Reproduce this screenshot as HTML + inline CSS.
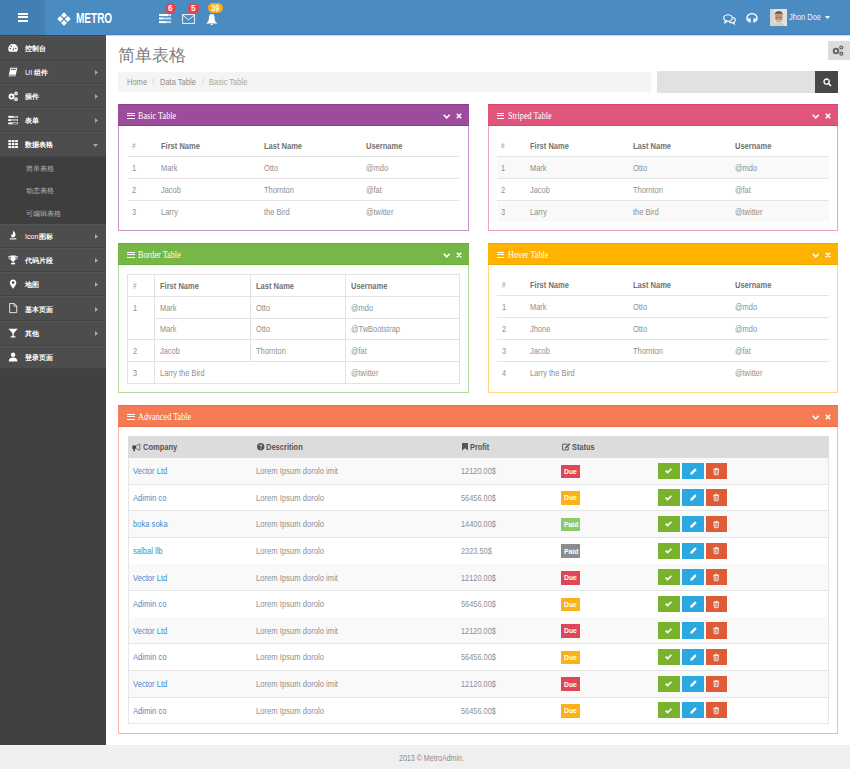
<!DOCTYPE html>
<html><head><meta charset="utf-8"><title>Metro Admin</title>
<style>
*{box-sizing:border-box;margin:0;padding:0}
html,body{width:850px;height:769px;overflow:hidden;background:#fff}
body{position:relative;font-family:"Liberation Sans",sans-serif}
.t{position:absolute;white-space:nowrap}
.b{position:absolute}
svg{position:absolute;overflow:visible}
</style></head><body>
<div class="b" style="left:0.00px;top:0.00px;width:850.00px;height:35.00px;background:#4a8bc2"></div>
<div class="b" style="left:106.00px;top:34.00px;width:744.00px;height:1.00px;background:#3f80bf"></div>
<div class="b" style="left:106.00px;top:35.00px;width:744.00px;height:1.00px;background:#c4d9ee"></div>
<div class="b" style="left:0.00px;top:34.00px;width:106.00px;height:1.00px;background:#4a90d0"></div>
<div class="b" style="left:0.00px;top:0.00px;width:45.00px;height:35.00px;background:#437fb3"></div>
<div class="b" style="left:17.60px;top:13.20px;width:10.80px;height:2.00px;background:#fff"></div>
<div class="b" style="left:17.60px;top:16.40px;width:10.80px;height:2.00px;background:#fff"></div>
<div class="b" style="left:17.60px;top:19.60px;width:10.80px;height:2.00px;background:#fff"></div>
<svg style="left:57px;top:12px" width="14" height="14" viewBox="0 0 14 14"><g fill="#fff"><path d="M7 0.3L9.9 3.2L7 6.1L4.1 3.2Z"/><path d="M3.2 4.1L6.1 7L3.2 9.9L0.3 7Z"/><path d="M10.8 4.1L13.7 7L10.8 9.9L7.9 7Z"/><path d="M7 7.9L9.9 10.8L7 13.7L4.1 10.8Z"/></g></svg>
<div class="t" style="left:76.30px;top:11.35px;font-size:14px;line-height:14px;color:#fff;font-weight:bold;font-family:'Liberation Sans',sans-serif;transform:scaleX(0.715);transform-origin:0 0;">METRO</div>
<svg style="left:158.7px;top:13.8px" width="12.5" height="9.5" viewBox="0 0 12.5 9.5"><g fill="#fff"><rect x="0" y="0" width="9.3" height="2.1"/><rect x="9.3" y="0" width="2.9" height="2.1" opacity=".7"/><rect x="0" y="3.5" width="4.2" height="2"/><rect x="4.2" y="3.5" width="8" height="2" opacity=".7"/><rect x="0" y="7.1" width="7.3" height="2"/><rect x="7.3" y="7.1" width="4.9" height="2" opacity=".7"/></g></svg>
<svg style="left:182px;top:14px" width="13" height="10" viewBox="0 0 13 10"><g fill="none" stroke="#f4f8fc" stroke-width=".95"><rect x="0.6" y="0.6" width="11.8" height="8.8"/><path d="M0.8 1.2L6.5 5.8L12.2 1.2"/></g></svg>
<svg style="left:206.3px;top:13.5px" width="11.5" height="11.6" viewBox="0 0 11.5 11.6"><path fill="#fff" d="M5.75 0C3.4 0 2.9 2 2.9 4.2C2.9 6.6 1.8 8 0 9.6L11.5 9.6C9.7 8 8.6 6.6 8.6 4.2C8.6 2 8.1 0 5.75 0Z M4.3 10.1L7.2 10.1L5.75 11.6Z"/></svg>
<div class="b" style="left:164.80px;top:3.00px;width:11.10px;height:10.60px;background:#e7434f;border-radius:50%"></div>
<div class="t" style="left:167.85px;top:4.45px;font-size:8.6px;line-height:8.6px;color:#fff;font-weight:bold;font-family:'Liberation Sans',sans-serif;transform:scaleX(0.95);transform-origin:0 0;">6</div>
<div class="b" style="left:188.30px;top:3.00px;width:11.00px;height:10.60px;background:#e7434f;border-radius:50%"></div>
<div class="t" style="left:191.30px;top:4.45px;font-size:8.6px;line-height:8.6px;color:#fff;font-weight:bold;font-family:'Liberation Sans',sans-serif;transform:scaleX(0.95);transform-origin:0 0;">5</div>
<div class="b" style="left:207.50px;top:2.90px;width:15.60px;height:10.60px;background:#fcae18;border-radius:5.3px"></div>
<div class="t" style="left:210.60px;top:4.35px;font-size:8.4px;line-height:8.4px;color:#fff;font-weight:bold;font-family:'Liberation Sans',sans-serif;transform:scaleX(0.9);transform-origin:0 0;">39</div>
<svg style="left:722.5px;top:13.5px" width="13" height="11" viewBox="0 0 13 11"><g fill="none" stroke="#fff" stroke-width="1.1"><ellipse cx="5" cy="4" rx="4.3" ry="3.2"/><path d="M2.5 6.8L1.8 8.8L4.5 7.3"/><path d="M9.6 3.2C11.6 3.9 12.5 5.1 12.3 6.4C12.1 7.4 11.4 8 10.8 8.3L11.3 10L9 8.6C7.8 8.7 6.8 8.4 6 7.8"/></g></svg>
<svg style="left:746.3px;top:13.2px" width="12" height="10" viewBox="0 0 12 10"><g fill="#fff"><path d="M6 0C2.7 0 0.3 2.3 0.3 5.3C0.3 6.7 0.8 7.7 1.6 8.5L2.6 7.8C2 7.1 1.6 6.3 1.6 5.3C1.6 3 3.5 1.3 6 1.3C8.5 1.3 10.4 3 10.4 5.3C10.4 6.3 10 7.1 9.4 7.8L10.4 8.5C11.2 7.7 11.7 6.7 11.7 5.3C11.7 2.3 9.3 0 6 0Z"/><path d="M2.2 5.2L4.6 5.6L4.6 9.8L2.2 8.8Z"/><path d="M9.8 5.2L7.4 5.6L7.4 9.8L9.8 8.8Z"/></g></svg>
<svg style="left:770px;top:9px" width="17" height="17" viewBox="0 0 17 17"><rect width="17" height="17" fill="#e4e2df"/><rect x="0" y="0" width="4" height="17" fill="#d8d5d1"/><path d="M3 17C3.5 14.2 5.5 13.2 8.8 13.2C12 13.2 14 14.2 14.5 17Z" fill="#d9cfc6"/><ellipse cx="8.8" cy="8.4" rx="3.9" ry="4.9" fill="#c39377"/><path d="M4.8 6.6C4.6 3.4 6.4 2.3 8.8 2.3C11.3 2.3 13 3.4 12.8 6.6L12.2 5.2C11 4.4 6.6 4.4 5.4 5.2Z" fill="#5e4a3e"/><path d="M6.6 8.6H7.8M9.8 8.6H11" stroke="#4a3a30" stroke-width=".7"/><path d="M7.3 11.2C8.2 11.8 9.4 11.8 10.3 11.2" stroke="#f4eee8" stroke-width=".8" fill="none"/></svg>
<div class="t" style="left:789.00px;top:12.50px;font-size:8.5px;line-height:8.5px;color:#eef3f8;font-weight:normal;font-family:'Liberation Sans',sans-serif;transform:scaleX(0.8800);transform-origin:0 0;">Jhon Doe</div>
<svg style="left:825px;top:15.8px" width="5" height="3" viewBox="0 0 5 3"><path d="M0 0H5L2.5 3Z" fill="#fff"/></svg>
<div class="b" style="left:0.00px;top:35.00px;width:106.00px;height:710.00px;background:#414141"></div>
<div class="b" style="left:0.00px;top:35.50px;width:106.00px;height:25.00px;background:#4d4d4d"></div>
<div class="b" style="left:0.00px;top:59.50px;width:106.00px;height:1.00px;background:#444"></div>
<div class="b" style="left:0.00px;top:35.50px;width:106.00px;height:0.60px;background:#555"></div>
<div class="t" style="left:25.00px;top:45.03px;font-size:7.2px;line-height:7.2px;color:#fff;font-weight:bold;font-family:'Liberation Sans',sans-serif;">控制台</div>
<div class="b" style="left:0.00px;top:60.50px;width:106.00px;height:23.90px;background:#4d4d4d"></div>
<div class="b" style="left:0.00px;top:83.40px;width:106.00px;height:1.00px;background:#444"></div>
<div class="b" style="left:0.00px;top:60.50px;width:106.00px;height:0.60px;background:#555"></div>
<div class="t" style="left:25.00px;top:69.48px;font-size:7.2px;line-height:7.2px;color:#fff;font-weight:bold;font-family:'Liberation Sans',sans-serif;"><span style='font-weight:normal'>UI</span> 组件</div>
<svg style="left:94.5px;top:70.45px" width="3" height="5" viewBox="0 0 3 5"><path d="M0 0L3 2.5L0 5Z" fill="#aaa"/></svg>
<div class="b" style="left:0.00px;top:84.40px;width:106.00px;height:23.90px;background:#4d4d4d"></div>
<div class="b" style="left:0.00px;top:107.30px;width:106.00px;height:1.00px;background:#444"></div>
<div class="b" style="left:0.00px;top:84.40px;width:106.00px;height:0.60px;background:#555"></div>
<div class="t" style="left:25.00px;top:93.38px;font-size:7.2px;line-height:7.2px;color:#fff;font-weight:bold;font-family:'Liberation Sans',sans-serif;">插件</div>
<svg style="left:94.5px;top:94.35px" width="3" height="5" viewBox="0 0 3 5"><path d="M0 0L3 2.5L0 5Z" fill="#aaa"/></svg>
<div class="b" style="left:0.00px;top:108.30px;width:106.00px;height:24.00px;background:#4d4d4d"></div>
<div class="b" style="left:0.00px;top:131.30px;width:106.00px;height:1.00px;background:#444"></div>
<div class="b" style="left:0.00px;top:108.30px;width:106.00px;height:0.60px;background:#555"></div>
<div class="t" style="left:25.00px;top:117.33px;font-size:7.2px;line-height:7.2px;color:#fff;font-weight:bold;font-family:'Liberation Sans',sans-serif;">表单</div>
<svg style="left:94.5px;top:118.30px" width="3" height="5" viewBox="0 0 3 5"><path d="M0 0L3 2.5L0 5Z" fill="#aaa"/></svg>
<div class="b" style="left:0.00px;top:132.30px;width:106.00px;height:24.20px;background:#4d4d4d"></div>
<div class="b" style="left:0.00px;top:155.50px;width:106.00px;height:1.00px;background:#444"></div>
<div class="b" style="left:0.00px;top:132.30px;width:106.00px;height:0.60px;background:#555"></div>
<div class="t" style="left:25.00px;top:141.43px;font-size:7.2px;line-height:7.2px;color:#fff;font-weight:bold;font-family:'Liberation Sans',sans-serif;">数据表格</div>
<svg style="left:93.2px;top:144.00px" width="5" height="3" viewBox="0 0 5 3"><path d="M0 0H5L2.5 3Z" fill="#aaa"/></svg>
<div class="b" style="left:0.00px;top:156.50px;width:106.00px;height:67.20px;background:#3e3e3e"></div>
<div class="t" style="left:26.40px;top:165.03px;font-size:7.2px;line-height:7.2px;color:#b4b4b4;font-weight:normal;font-family:'Liberation Sans',sans-serif;">简单表格</div>
<div class="t" style="left:26.40px;top:187.43px;font-size:7.2px;line-height:7.2px;color:#b4b4b4;font-weight:normal;font-family:'Liberation Sans',sans-serif;">动态表格</div>
<div class="t" style="left:26.40px;top:209.83px;font-size:7.2px;line-height:7.2px;color:#b4b4b4;font-weight:normal;font-family:'Liberation Sans',sans-serif;">可编辑表格</div>
<div class="b" style="left:0.00px;top:223.70px;width:106.00px;height:24.30px;background:#4d4d4d"></div>
<div class="b" style="left:0.00px;top:247.00px;width:106.00px;height:1.00px;background:#444"></div>
<div class="b" style="left:0.00px;top:223.70px;width:106.00px;height:0.60px;background:#555"></div>
<div class="t" style="left:25.00px;top:232.88px;font-size:7.2px;line-height:7.2px;color:#fff;font-weight:bold;font-family:'Liberation Sans',sans-serif;"><span style='font-weight:normal'>Icon</span>图标</div>
<svg style="left:94.5px;top:233.85px" width="3" height="5" viewBox="0 0 3 5"><path d="M0 0L3 2.5L0 5Z" fill="#aaa"/></svg>
<div class="b" style="left:0.00px;top:248.00px;width:106.00px;height:24.20px;background:#4d4d4d"></div>
<div class="b" style="left:0.00px;top:271.20px;width:106.00px;height:1.00px;background:#444"></div>
<div class="b" style="left:0.00px;top:248.00px;width:106.00px;height:0.60px;background:#555"></div>
<div class="t" style="left:25.00px;top:257.13px;font-size:7.2px;line-height:7.2px;color:#fff;font-weight:bold;font-family:'Liberation Sans',sans-serif;">代码片段</div>
<svg style="left:94.5px;top:258.10px" width="3" height="5" viewBox="0 0 3 5"><path d="M0 0L3 2.5L0 5Z" fill="#aaa"/></svg>
<div class="b" style="left:0.00px;top:272.20px;width:106.00px;height:24.20px;background:#4d4d4d"></div>
<div class="b" style="left:0.00px;top:295.40px;width:106.00px;height:1.00px;background:#444"></div>
<div class="b" style="left:0.00px;top:272.20px;width:106.00px;height:0.60px;background:#555"></div>
<div class="t" style="left:25.00px;top:281.33px;font-size:7.2px;line-height:7.2px;color:#fff;font-weight:bold;font-family:'Liberation Sans',sans-serif;">地图</div>
<svg style="left:94.5px;top:282.30px" width="3" height="5" viewBox="0 0 3 5"><path d="M0 0L3 2.5L0 5Z" fill="#aaa"/></svg>
<div class="b" style="left:0.00px;top:296.40px;width:106.00px;height:24.80px;background:#4d4d4d"></div>
<div class="b" style="left:0.00px;top:320.20px;width:106.00px;height:1.00px;background:#444"></div>
<div class="b" style="left:0.00px;top:296.40px;width:106.00px;height:0.60px;background:#555"></div>
<div class="t" style="left:25.00px;top:305.83px;font-size:7.2px;line-height:7.2px;color:#fff;font-weight:bold;font-family:'Liberation Sans',sans-serif;">基本页面</div>
<svg style="left:94.5px;top:306.80px" width="3" height="5" viewBox="0 0 3 5"><path d="M0 0L3 2.5L0 5Z" fill="#aaa"/></svg>
<div class="b" style="left:0.00px;top:321.20px;width:106.00px;height:24.40px;background:#4d4d4d"></div>
<div class="b" style="left:0.00px;top:344.60px;width:106.00px;height:1.00px;background:#444"></div>
<div class="b" style="left:0.00px;top:321.20px;width:106.00px;height:0.60px;background:#555"></div>
<div class="t" style="left:25.00px;top:330.43px;font-size:7.2px;line-height:7.2px;color:#fff;font-weight:bold;font-family:'Liberation Sans',sans-serif;">其他</div>
<svg style="left:94.5px;top:331.40px" width="3" height="5" viewBox="0 0 3 5"><path d="M0 0L3 2.5L0 5Z" fill="#aaa"/></svg>
<div class="b" style="left:0.00px;top:345.60px;width:106.00px;height:23.40px;background:#4d4d4d"></div>
<div class="b" style="left:0.00px;top:368.00px;width:106.00px;height:1.00px;background:#444"></div>
<div class="b" style="left:0.00px;top:345.60px;width:106.00px;height:0.60px;background:#555"></div>
<div class="t" style="left:25.00px;top:354.33px;font-size:7.2px;line-height:7.2px;color:#fff;font-weight:bold;font-family:'Liberation Sans',sans-serif;">登录页面</div>
<svg style="left:8.1px;top:42.70px" width="10.2" height="10.2" viewBox="0 0 11 11"><path fill="#fff" d="M5.5 1C2.5 1 0.3 3.3 0.3 6.2C0.3 7.5 0.7 8.6 1.4 9.5L9.6 9.5C10.3 8.6 10.7 7.5 10.7 6.2C10.7 3.3 8.5 1 5.5 1Z"/><g fill="#4d4d4d"><circle cx="2.6" cy="6" r=".8"/><circle cx="3.6" cy="3.5" r=".8"/><circle cx="8.4" cy="6" r=".8"/><path d="M5 8L6.6 3.4L6.3 8.2Z"/></g></svg>
<svg style="left:8.1px;top:67.20px" width="10.2" height="10.2" viewBox="0 0 11 11"><path fill="#fff" d="M2.5 0.8H10L8.5 8.5H1Z"/><path fill="#4d4d4d" d="M3.2 2H8.8L8.6 3H3Z"/><path fill="#fff" d="M0.7 9.2H8.4V10H0.5Z"/></svg>
<svg style="left:8.1px;top:91.00px" width="10.2" height="10.2" viewBox="0 0 11 11"><circle fill="#fff" cx="3.8" cy="6" r="3.2"/><circle fill="#4d4d4d" cx="3.8" cy="6" r="1.2"/><circle fill="#fff" cx="8.7" cy="2.6" r="2"/><circle fill="#4d4d4d" cx="8.7" cy="2.6" r=".7"/><circle fill="#fff" cx="8.7" cy="8.8" r="2"/><circle fill="#4d4d4d" cx="8.7" cy="8.8" r=".7"/></svg>
<svg style="left:8.1px;top:115.00px" width="10.2" height="10.2" viewBox="0 0 11 11"><g fill="#fff"><rect x="0.3" y="1" width="10.4" height="2"/><rect x="0.3" y="4.5" width="10.4" height="2"/><rect x="0.3" y="8" width="10.4" height="2"/></g><g fill="#4d4d4d"><rect x="6" y="1.5" width="4" height="1"/><rect x="3" y="5" width="7" height="1"/><rect x="5" y="8.5" width="5" height="1"/></g></svg>
<svg style="left:8.1px;top:138.70px" width="10.2" height="10.2" viewBox="0 0 11 11"><g fill="#fff"><rect x="0.3" y="1.2" width="3" height="2.2"/><rect x="4" y="1.2" width="3" height="2.2"/><rect x="7.7" y="1.2" width="3" height="2.2"/><rect x="0.3" y="4.4" width="3" height="2.2"/><rect x="4" y="4.4" width="3" height="2.2"/><rect x="7.7" y="4.4" width="3" height="2.2"/><rect x="0.3" y="7.6" width="3" height="2.2"/><rect x="4" y="7.6" width="3" height="2.2"/><rect x="7.7" y="7.6" width="3" height="2.2"/></g></svg>
<svg style="left:8.1px;top:230.20px" width="10.2" height="10.2" viewBox="0 0 11 11"><path fill="#fff" d="M6 0.5C7 2.5 8.5 3.5 8 6C7.6 7.6 6 8.2 4.8 8C3.4 7.6 3 6 4 4.5C4.8 5.4 5.5 5 5.3 4C5 2.5 6 1.5 6 0.5Z"/><rect fill="#fff" x="2" y="9" width="7" height="1.2"/></svg>
<svg style="left:8.1px;top:254.70px" width="10.2" height="10.2" viewBox="0 0 11 11"><path fill="#fff" d="M2.8 0.6H8.2V3.8C8.2 5.6 7 6.8 5.5 6.8C4 6.8 2.8 5.6 2.8 3.8Z"/><path fill="none" stroke="#fff" stroke-width=".9" d="M2.8 1.6H0.7C0.7 3.6 1.7 4.6 3 4.6M8.2 1.6H10.3C10.3 3.6 9.3 4.6 8 4.6"/><rect fill="#fff" x="4.9" y="6.5" width="1.2" height="2"/><rect fill="#fff" x="3.3" y="8.5" width="4.4" height="1.6"/></svg>
<svg style="left:8.1px;top:278.90px" width="10.2" height="10.2" viewBox="0 0 11 11"><path fill="#fff" d="M5.5 0.5C3.4 0.5 2 2 2 4C2 6.2 4 8.2 5.5 10.5C7 8.2 9 6.2 9 4C9 2 7.6 0.5 5.5 0.5Z"/><circle fill="#4d4d4d" cx="5.5" cy="3.9" r="1.4"/></svg>
<svg style="left:8.1px;top:303.20px" width="10.2" height="10.2" viewBox="0 0 11 11"><path fill="none" stroke="#fff" stroke-width=".9" d="M1.8 0.6H6.8L9.4 3.2V10.4H1.8Z M6.6 0.6V3.4H9.4"/></svg>
<svg style="left:8.1px;top:327.80px" width="10.2" height="10.2" viewBox="0 0 11 11"><path fill="#fff" d="M0.5 0.8H10.5L6.2 5.6V9H8V10.2H3V9H4.8V5.6Z"/></svg>
<svg style="left:8.1px;top:351.60px" width="10.2" height="10.2" viewBox="0 0 11 11"><circle fill="#fff" cx="5.5" cy="3" r="2.4"/><path fill="#fff" d="M0.8 10.3C0.8 7.3 2.5 6 5.5 6C8.5 6 10.2 7.3 10.2 10.3Z"/></svg>
<div class="t" style="left:118.30px;top:46.81px;font-size:17px;line-height:17px;color:#808080;font-weight:normal;font-family:'Liberation Sans',sans-serif;font-weight:300;">简单表格</div>
<div class="b" style="left:827.70px;top:41.40px;width:22.30px;height:18.50px;background:#dcdcdc"></div>
<svg style="left:832px;top:44.8px" width="12" height="11" viewBox="0 0 12 11"><g fill="#666"><circle cx="4" cy="6" r="3.3"/><circle cx="9.3" cy="2.5" r="2.1"/><circle cx="9.3" cy="8.7" r="2.1"/></g><g fill="#dcdcdc"><circle cx="4" cy="6" r="1.3"/><circle cx="9.3" cy="2.5" r=".8"/><circle cx="9.3" cy="8.7" r=".8"/></g></svg>
<div class="b" style="left:118.00px;top:71.80px;width:532.80px;height:20.30px;background:#f4f4f4"></div>
<div class="t" style="left:126.60px;top:77.96px;font-size:9.0px;line-height:9.0px;color:#8f8f8f;font-weight:normal;font-family:'Liberation Sans',sans-serif;transform:scaleX(0.8356);transform-origin:0 0;">Home</div>
<div class="t" style="left:151.80px;top:77.96px;font-size:9.0px;line-height:9.0px;color:#cfcfcf;font-weight:normal;font-family:'Liberation Sans',sans-serif;transform:scaleX(0.8356);transform-origin:0 0;">/</div>
<div class="t" style="left:160.20px;top:77.96px;font-size:9.0px;line-height:9.0px;color:#8f8f8f;font-weight:normal;font-family:'Liberation Sans',sans-serif;transform:scaleX(0.8356);transform-origin:0 0;">Data Table</div>
<div class="t" style="left:201.80px;top:77.96px;font-size:9.0px;line-height:9.0px;color:#cfcfcf;font-weight:normal;font-family:'Liberation Sans',sans-serif;transform:scaleX(0.8356);transform-origin:0 0;">/</div>
<div class="t" style="left:209.30px;top:77.96px;font-size:9.0px;line-height:9.0px;color:#a8a8a8;font-weight:normal;font-family:'Liberation Sans',sans-serif;transform:scaleX(0.8356);transform-origin:0 0;">Basic Table</div>
<div class="b" style="left:657.00px;top:71.20px;width:157.50px;height:21.40px;background:#e1e1e1"></div>
<div class="b" style="left:815.20px;top:71.20px;width:22.80px;height:21.40px;background:#474747"></div>
<svg style="left:822.5px;top:78.3px" width="9" height="9" viewBox="0 0 9 9"><circle cx="3.6" cy="3.6" r="2.6" fill="none" stroke="#fff" stroke-width="1.3"/><path d="M5.4 5.4L8 8" stroke="#fff" stroke-width="1.6"/></svg>
<div class="b" style="left:118.00px;top:104.00px;width:351.00px;height:127.00px;background:#fff;border:1px solid #c995c8;border-top:none"></div>
<div class="b" style="left:118.00px;top:104.00px;width:351.00px;height:22.00px;background:#9d4b9c;border-top:1px solid #8f3c8e;border-bottom:1px solid #8f3c8e"></div>
<div class="b" style="left:127.20px;top:112.80px;width:7.60px;height:1.30px;background:#fff"></div>
<div class="b" style="left:127.20px;top:115.20px;width:7.60px;height:1.30px;background:#fff"></div>
<div class="b" style="left:127.20px;top:117.70px;width:7.60px;height:1.30px;background:#fff"></div>
<div class="t" style="left:138.00px;top:110.53px;font-size:10px;line-height:10px;color:#fff;font-weight:normal;font-family:'Liberation Serif',serif;transform:scaleX(0.82);transform-origin:0 0;">Basic Table</div>
<svg style="left:442.80px;top:114.10px" width="7.4" height="5" viewBox="0 0 7.4 5"><path d="M0.7 0.7L3.7 3.8L6.7 0.7" fill="none" stroke="#fff" stroke-width="1.6"/></svg>
<svg style="left:455.80px;top:113.00px" width="6" height="6" viewBox="0 0 6 6"><path d="M0.8 0.8L5.2 5.2M5.2 0.8L0.8 5.2" fill="none" stroke="#fff" stroke-width="1.6"/></svg>
<div class="t" style="left:132.00px;top:141.86px;font-size:9.0px;line-height:9.0px;color:#a0a0a0;font-weight:normal;font-family:'Liberation Sans',sans-serif;transform:scaleX(0.7111);transform-origin:0 0;">#</div>
<div class="t" style="left:160.70px;top:141.66px;font-size:9.0px;line-height:9.0px;color:#717171;font-weight:bold;font-family:'Liberation Sans',sans-serif;transform:scaleX(0.8356);transform-origin:0 0;">First Name</div>
<div class="t" style="left:264.00px;top:141.66px;font-size:9.0px;line-height:9.0px;color:#717171;font-weight:bold;font-family:'Liberation Sans',sans-serif;transform:scaleX(0.8356);transform-origin:0 0;">Last Name</div>
<div class="t" style="left:366.00px;top:141.66px;font-size:9.0px;line-height:9.0px;color:#717171;font-weight:bold;font-family:'Liberation Sans',sans-serif;transform:scaleX(0.8356);transform-origin:0 0;">Username</div>
<div class="b" style="left:127.50px;top:156.00px;width:331.50px;height:1.00px;background:#e4e4e4"></div>
<div class="t" style="left:132.00px;top:164.06px;font-size:9.0px;line-height:9.0px;color:#8f8f8f;font-weight:normal;font-family:'Liberation Sans',sans-serif;transform:scaleX(0.8267);transform-origin:0 0;">1</div>
<div class="t" style="left:160.70px;top:164.06px;font-size:9.0px;line-height:9.0px;color:#8f8f8f;font-weight:normal;font-family:'Liberation Sans',sans-serif;transform:scaleX(0.8267);transform-origin:0 0;">Mark</div>
<div class="t" style="left:264.00px;top:164.06px;font-size:9.0px;line-height:9.0px;color:#8f8f8f;font-weight:normal;font-family:'Liberation Sans',sans-serif;transform:scaleX(0.8267);transform-origin:0 0;">Otto</div>
<div class="t" style="left:366.00px;top:164.06px;font-size:9.0px;line-height:9.0px;color:#8f8f8f;font-weight:normal;font-family:'Liberation Sans',sans-serif;transform:scaleX(0.8267);transform-origin:0 0;">@mdo</div>
<div class="b" style="left:127.50px;top:178.00px;width:331.50px;height:1.00px;background:#e4e4e4"></div>
<div class="t" style="left:132.00px;top:186.06px;font-size:9.0px;line-height:9.0px;color:#8f8f8f;font-weight:normal;font-family:'Liberation Sans',sans-serif;transform:scaleX(0.8267);transform-origin:0 0;">2</div>
<div class="t" style="left:160.70px;top:186.06px;font-size:9.0px;line-height:9.0px;color:#8f8f8f;font-weight:normal;font-family:'Liberation Sans',sans-serif;transform:scaleX(0.8267);transform-origin:0 0;">Jacob</div>
<div class="t" style="left:264.00px;top:186.06px;font-size:9.0px;line-height:9.0px;color:#8f8f8f;font-weight:normal;font-family:'Liberation Sans',sans-serif;transform:scaleX(0.8267);transform-origin:0 0;">Thornton</div>
<div class="t" style="left:366.00px;top:186.06px;font-size:9.0px;line-height:9.0px;color:#8f8f8f;font-weight:normal;font-family:'Liberation Sans',sans-serif;transform:scaleX(0.8267);transform-origin:0 0;">@fat</div>
<div class="b" style="left:127.50px;top:200.00px;width:331.50px;height:1.00px;background:#e4e4e4"></div>
<div class="t" style="left:132.00px;top:208.06px;font-size:9.0px;line-height:9.0px;color:#8f8f8f;font-weight:normal;font-family:'Liberation Sans',sans-serif;transform:scaleX(0.8267);transform-origin:0 0;">3</div>
<div class="t" style="left:160.70px;top:208.06px;font-size:9.0px;line-height:9.0px;color:#8f8f8f;font-weight:normal;font-family:'Liberation Sans',sans-serif;transform:scaleX(0.8267);transform-origin:0 0;">Larry</div>
<div class="t" style="left:264.00px;top:208.06px;font-size:9.0px;line-height:9.0px;color:#8f8f8f;font-weight:normal;font-family:'Liberation Sans',sans-serif;transform:scaleX(0.8267);transform-origin:0 0;">the Bird</div>
<div class="t" style="left:366.00px;top:208.06px;font-size:9.0px;line-height:9.0px;color:#8f8f8f;font-weight:normal;font-family:'Liberation Sans',sans-serif;transform:scaleX(0.8267);transform-origin:0 0;">@twitter</div>
<div class="b" style="left:487.50px;top:104.00px;width:350.50px;height:127.00px;background:#fff;border:1px solid #f0a6b8;border-top:none"></div>
<div class="b" style="left:487.50px;top:104.00px;width:350.50px;height:22.00px;background:#e0567b;border-top:1px solid #d9466d;border-bottom:1px solid #d9466d"></div>
<div class="b" style="left:496.70px;top:112.80px;width:7.60px;height:1.30px;background:#fff"></div>
<div class="b" style="left:496.70px;top:115.20px;width:7.60px;height:1.30px;background:#fff"></div>
<div class="b" style="left:496.70px;top:117.70px;width:7.60px;height:1.30px;background:#fff"></div>
<div class="t" style="left:507.50px;top:110.53px;font-size:10px;line-height:10px;color:#fff;font-weight:normal;font-family:'Liberation Serif',serif;transform:scaleX(0.82);transform-origin:0 0;">Striped Table</div>
<svg style="left:811.80px;top:114.10px" width="7.4" height="5" viewBox="0 0 7.4 5"><path d="M0.7 0.7L3.7 3.8L6.7 0.7" fill="none" stroke="#fff" stroke-width="1.6"/></svg>
<svg style="left:824.80px;top:113.00px" width="6" height="6" viewBox="0 0 6 6"><path d="M0.8 0.8L5.2 5.2M5.2 0.8L0.8 5.2" fill="none" stroke="#fff" stroke-width="1.6"/></svg>
<div class="t" style="left:501.20px;top:141.86px;font-size:9.0px;line-height:9.0px;color:#a0a0a0;font-weight:normal;font-family:'Liberation Sans',sans-serif;transform:scaleX(0.7111);transform-origin:0 0;">#</div>
<div class="t" style="left:530.20px;top:141.66px;font-size:9.0px;line-height:9.0px;color:#717171;font-weight:bold;font-family:'Liberation Sans',sans-serif;transform:scaleX(0.8356);transform-origin:0 0;">First Name</div>
<div class="t" style="left:633.00px;top:141.66px;font-size:9.0px;line-height:9.0px;color:#717171;font-weight:bold;font-family:'Liberation Sans',sans-serif;transform:scaleX(0.8356);transform-origin:0 0;">Last Name</div>
<div class="t" style="left:735.00px;top:141.66px;font-size:9.0px;line-height:9.0px;color:#717171;font-weight:bold;font-family:'Liberation Sans',sans-serif;transform:scaleX(0.8356);transform-origin:0 0;">Username</div>
<div class="b" style="left:497.00px;top:156.00px;width:332.00px;height:1.00px;background:#e4e4e4"></div>
<div class="b" style="left:497.00px;top:157.00px;width:332.00px;height:21.00px;background:#f9f9f9"></div>
<div class="t" style="left:501.20px;top:164.06px;font-size:9.0px;line-height:9.0px;color:#8f8f8f;font-weight:normal;font-family:'Liberation Sans',sans-serif;transform:scaleX(0.8267);transform-origin:0 0;">1</div>
<div class="t" style="left:530.20px;top:164.06px;font-size:9.0px;line-height:9.0px;color:#8f8f8f;font-weight:normal;font-family:'Liberation Sans',sans-serif;transform:scaleX(0.8267);transform-origin:0 0;">Mark</div>
<div class="t" style="left:633.00px;top:164.06px;font-size:9.0px;line-height:9.0px;color:#8f8f8f;font-weight:normal;font-family:'Liberation Sans',sans-serif;transform:scaleX(0.8267);transform-origin:0 0;">Otto</div>
<div class="t" style="left:735.00px;top:164.06px;font-size:9.0px;line-height:9.0px;color:#8f8f8f;font-weight:normal;font-family:'Liberation Sans',sans-serif;transform:scaleX(0.8267);transform-origin:0 0;">@mdo</div>
<div class="b" style="left:497.00px;top:178.00px;width:332.00px;height:1.00px;background:#e4e4e4"></div>
<div class="t" style="left:501.20px;top:186.06px;font-size:9.0px;line-height:9.0px;color:#8f8f8f;font-weight:normal;font-family:'Liberation Sans',sans-serif;transform:scaleX(0.8267);transform-origin:0 0;">2</div>
<div class="t" style="left:530.20px;top:186.06px;font-size:9.0px;line-height:9.0px;color:#8f8f8f;font-weight:normal;font-family:'Liberation Sans',sans-serif;transform:scaleX(0.8267);transform-origin:0 0;">Jacob</div>
<div class="t" style="left:633.00px;top:186.06px;font-size:9.0px;line-height:9.0px;color:#8f8f8f;font-weight:normal;font-family:'Liberation Sans',sans-serif;transform:scaleX(0.8267);transform-origin:0 0;">Thornton</div>
<div class="t" style="left:735.00px;top:186.06px;font-size:9.0px;line-height:9.0px;color:#8f8f8f;font-weight:normal;font-family:'Liberation Sans',sans-serif;transform:scaleX(0.8267);transform-origin:0 0;">@fat</div>
<div class="b" style="left:497.00px;top:200.00px;width:332.00px;height:1.00px;background:#e4e4e4"></div>
<div class="b" style="left:497.00px;top:201.00px;width:332.00px;height:21.00px;background:#f9f9f9"></div>
<div class="t" style="left:501.20px;top:208.06px;font-size:9.0px;line-height:9.0px;color:#8f8f8f;font-weight:normal;font-family:'Liberation Sans',sans-serif;transform:scaleX(0.8267);transform-origin:0 0;">3</div>
<div class="t" style="left:530.20px;top:208.06px;font-size:9.0px;line-height:9.0px;color:#8f8f8f;font-weight:normal;font-family:'Liberation Sans',sans-serif;transform:scaleX(0.8267);transform-origin:0 0;">Larry</div>
<div class="t" style="left:633.00px;top:208.06px;font-size:9.0px;line-height:9.0px;color:#8f8f8f;font-weight:normal;font-family:'Liberation Sans',sans-serif;transform:scaleX(0.8267);transform-origin:0 0;">the Bird</div>
<div class="t" style="left:735.00px;top:208.06px;font-size:9.0px;line-height:9.0px;color:#8f8f8f;font-weight:normal;font-family:'Liberation Sans',sans-serif;transform:scaleX(0.8267);transform-origin:0 0;">@twitter</div>
<div class="b" style="left:118.00px;top:243.00px;width:351.00px;height:150.00px;background:#fff;border:1px solid #b5da9b;border-top:none"></div>
<div class="b" style="left:118.00px;top:243.00px;width:351.00px;height:22.00px;background:#77b748;border-top:1px solid #6aae3a;border-bottom:1px solid #6aae3a"></div>
<div class="b" style="left:127.20px;top:251.80px;width:7.60px;height:1.30px;background:#fff"></div>
<div class="b" style="left:127.20px;top:254.20px;width:7.60px;height:1.30px;background:#fff"></div>
<div class="b" style="left:127.20px;top:256.70px;width:7.60px;height:1.30px;background:#fff"></div>
<div class="t" style="left:138.00px;top:249.53px;font-size:10px;line-height:10px;color:#fff;font-weight:normal;font-family:'Liberation Serif',serif;transform:scaleX(0.82);transform-origin:0 0;">Border Table</div>
<svg style="left:442.80px;top:253.10px" width="7.4" height="5" viewBox="0 0 7.4 5"><path d="M0.7 0.7L3.7 3.8L6.7 0.7" fill="none" stroke="#fff" stroke-width="1.6"/></svg>
<svg style="left:455.80px;top:252.00px" width="6" height="6" viewBox="0 0 6 6"><path d="M0.8 0.8L5.2 5.2M5.2 0.8L0.8 5.2" fill="none" stroke="#fff" stroke-width="1.6"/></svg>
<div class="b" style="left:487.50px;top:243.00px;width:350.50px;height:150.00px;background:#fff;border:1px solid #ffd985;border-top:none"></div>
<div class="b" style="left:487.50px;top:243.00px;width:350.50px;height:22.00px;background:#ffb300;border-top:1px solid #f5aa00;border-bottom:1px solid #f5aa00"></div>
<div class="b" style="left:496.70px;top:251.80px;width:7.60px;height:1.30px;background:#fff"></div>
<div class="b" style="left:496.70px;top:254.20px;width:7.60px;height:1.30px;background:#fff"></div>
<div class="b" style="left:496.70px;top:256.70px;width:7.60px;height:1.30px;background:#fff"></div>
<div class="t" style="left:507.50px;top:249.53px;font-size:10px;line-height:10px;color:#fff;font-weight:normal;font-family:'Liberation Serif',serif;transform:scaleX(0.82);transform-origin:0 0;">Hover Table</div>
<svg style="left:811.80px;top:253.10px" width="7.4" height="5" viewBox="0 0 7.4 5"><path d="M0.7 0.7L3.7 3.8L6.7 0.7" fill="none" stroke="#fff" stroke-width="1.6"/></svg>
<svg style="left:824.80px;top:252.00px" width="6" height="6" viewBox="0 0 6 6"><path d="M0.8 0.8L5.2 5.2M5.2 0.8L0.8 5.2" fill="none" stroke="#fff" stroke-width="1.6"/></svg>
<div class="t" style="left:502.00px;top:280.86px;font-size:9.0px;line-height:9.0px;color:#a0a0a0;font-weight:normal;font-family:'Liberation Sans',sans-serif;transform:scaleX(0.7111);transform-origin:0 0;">#</div>
<div class="t" style="left:530.00px;top:280.66px;font-size:9.0px;line-height:9.0px;color:#717171;font-weight:bold;font-family:'Liberation Sans',sans-serif;transform:scaleX(0.8356);transform-origin:0 0;">First Name</div>
<div class="t" style="left:633.00px;top:280.66px;font-size:9.0px;line-height:9.0px;color:#717171;font-weight:bold;font-family:'Liberation Sans',sans-serif;transform:scaleX(0.8356);transform-origin:0 0;">Last Name</div>
<div class="t" style="left:735.00px;top:280.66px;font-size:9.0px;line-height:9.0px;color:#717171;font-weight:bold;font-family:'Liberation Sans',sans-serif;transform:scaleX(0.8356);transform-origin:0 0;">Username</div>
<div class="b" style="left:497.00px;top:295.00px;width:332.00px;height:1.00px;background:#e4e4e4"></div>
<div class="t" style="left:502.00px;top:303.06px;font-size:9.0px;line-height:9.0px;color:#8f8f8f;font-weight:normal;font-family:'Liberation Sans',sans-serif;transform:scaleX(0.8267);transform-origin:0 0;">1</div>
<div class="t" style="left:530.00px;top:303.06px;font-size:9.0px;line-height:9.0px;color:#8f8f8f;font-weight:normal;font-family:'Liberation Sans',sans-serif;transform:scaleX(0.8267);transform-origin:0 0;">Mark</div>
<div class="t" style="left:633.00px;top:303.06px;font-size:9.0px;line-height:9.0px;color:#8f8f8f;font-weight:normal;font-family:'Liberation Sans',sans-serif;transform:scaleX(0.8267);transform-origin:0 0;">Otto</div>
<div class="t" style="left:735.00px;top:303.06px;font-size:9.0px;line-height:9.0px;color:#8f8f8f;font-weight:normal;font-family:'Liberation Sans',sans-serif;transform:scaleX(0.8267);transform-origin:0 0;">@mdo</div>
<div class="b" style="left:497.00px;top:317.00px;width:332.00px;height:1.00px;background:#e4e4e4"></div>
<div class="t" style="left:502.00px;top:325.06px;font-size:9.0px;line-height:9.0px;color:#8f8f8f;font-weight:normal;font-family:'Liberation Sans',sans-serif;transform:scaleX(0.8267);transform-origin:0 0;">2</div>
<div class="t" style="left:530.00px;top:325.06px;font-size:9.0px;line-height:9.0px;color:#8f8f8f;font-weight:normal;font-family:'Liberation Sans',sans-serif;transform:scaleX(0.8267);transform-origin:0 0;">Jhone</div>
<div class="t" style="left:633.00px;top:325.06px;font-size:9.0px;line-height:9.0px;color:#8f8f8f;font-weight:normal;font-family:'Liberation Sans',sans-serif;transform:scaleX(0.8267);transform-origin:0 0;">Otto</div>
<div class="t" style="left:735.00px;top:325.06px;font-size:9.0px;line-height:9.0px;color:#8f8f8f;font-weight:normal;font-family:'Liberation Sans',sans-serif;transform:scaleX(0.8267);transform-origin:0 0;">@mdo</div>
<div class="b" style="left:497.00px;top:339.00px;width:332.00px;height:1.00px;background:#e4e4e4"></div>
<div class="t" style="left:502.00px;top:347.06px;font-size:9.0px;line-height:9.0px;color:#8f8f8f;font-weight:normal;font-family:'Liberation Sans',sans-serif;transform:scaleX(0.8267);transform-origin:0 0;">3</div>
<div class="t" style="left:530.00px;top:347.06px;font-size:9.0px;line-height:9.0px;color:#8f8f8f;font-weight:normal;font-family:'Liberation Sans',sans-serif;transform:scaleX(0.8267);transform-origin:0 0;">Jacob</div>
<div class="t" style="left:633.00px;top:347.06px;font-size:9.0px;line-height:9.0px;color:#8f8f8f;font-weight:normal;font-family:'Liberation Sans',sans-serif;transform:scaleX(0.8267);transform-origin:0 0;">Thornton</div>
<div class="t" style="left:735.00px;top:347.06px;font-size:9.0px;line-height:9.0px;color:#8f8f8f;font-weight:normal;font-family:'Liberation Sans',sans-serif;transform:scaleX(0.8267);transform-origin:0 0;">@fat</div>
<div class="b" style="left:497.00px;top:361.00px;width:332.00px;height:1.00px;background:#e4e4e4"></div>
<div class="t" style="left:502.00px;top:369.06px;font-size:9.0px;line-height:9.0px;color:#8f8f8f;font-weight:normal;font-family:'Liberation Sans',sans-serif;transform:scaleX(0.8267);transform-origin:0 0;">4</div>
<div class="t" style="left:530.00px;top:369.06px;font-size:9.0px;line-height:9.0px;color:#8f8f8f;font-weight:normal;font-family:'Liberation Sans',sans-serif;transform:scaleX(0.8267);transform-origin:0 0;">Larry the Bird</div>
<div class="t" style="left:633.00px;top:369.06px;font-size:9.0px;line-height:9.0px;color:#8f8f8f;font-weight:normal;font-family:'Liberation Sans',sans-serif;transform:scaleX(0.8267);transform-origin:0 0;"></div>
<div class="t" style="left:735.00px;top:369.06px;font-size:9.0px;line-height:9.0px;color:#8f8f8f;font-weight:normal;font-family:'Liberation Sans',sans-serif;transform:scaleX(0.8267);transform-origin:0 0;">@twitter</div>
<div class="b" style="left:127.00px;top:274.00px;width:333.00px;height:110.00px;border:1px solid #e2e2e2"></div>
<div class="b" style="left:127.00px;top:296.00px;width:332.00px;height:1.00px;background:#e2e2e2"></div>
<div class="b" style="left:154.00px;top:318.00px;width:305.00px;height:1.00px;background:#e2e2e2"></div>
<div class="b" style="left:127.00px;top:339.00px;width:332.00px;height:1.00px;background:#e2e2e2"></div>
<div class="b" style="left:127.00px;top:361.00px;width:332.00px;height:1.00px;background:#e2e2e2"></div>
<div class="b" style="left:154.00px;top:274.00px;width:1.00px;height:109.00px;background:#e2e2e2"></div>
<div class="b" style="left:250.00px;top:274.00px;width:1.00px;height:87.00px;background:#e2e2e2"></div>
<div class="b" style="left:345.00px;top:274.00px;width:1.00px;height:109.00px;background:#e2e2e2"></div>
<div class="t" style="left:132.50px;top:281.56px;font-size:9.0px;line-height:9.0px;color:#a0a0a0;font-weight:normal;font-family:'Liberation Sans',sans-serif;transform:scaleX(0.7111);transform-origin:0 0;">#</div>
<div class="t" style="left:159.50px;top:281.56px;font-size:9.0px;line-height:9.0px;color:#717171;font-weight:bold;font-family:'Liberation Sans',sans-serif;transform:scaleX(0.8356);transform-origin:0 0;">First Name</div>
<div class="t" style="left:255.50px;top:281.56px;font-size:9.0px;line-height:9.0px;color:#717171;font-weight:bold;font-family:'Liberation Sans',sans-serif;transform:scaleX(0.8356);transform-origin:0 0;">Last Name</div>
<div class="t" style="left:350.50px;top:281.56px;font-size:9.0px;line-height:9.0px;color:#717171;font-weight:bold;font-family:'Liberation Sans',sans-serif;transform:scaleX(0.8356);transform-origin:0 0;">Username</div>
<div class="t" style="left:132.50px;top:303.56px;font-size:9.0px;line-height:9.0px;color:#8f8f8f;font-weight:normal;font-family:'Liberation Sans',sans-serif;transform:scaleX(0.8267);transform-origin:0 0;">1</div>
<div class="t" style="left:159.50px;top:303.56px;font-size:9.0px;line-height:9.0px;color:#8f8f8f;font-weight:normal;font-family:'Liberation Sans',sans-serif;transform:scaleX(0.8267);transform-origin:0 0;">Mark</div>
<div class="t" style="left:255.50px;top:303.56px;font-size:9.0px;line-height:9.0px;color:#8f8f8f;font-weight:normal;font-family:'Liberation Sans',sans-serif;transform:scaleX(0.8267);transform-origin:0 0;">Otto</div>
<div class="t" style="left:350.50px;top:303.56px;font-size:9.0px;line-height:9.0px;color:#8f8f8f;font-weight:normal;font-family:'Liberation Sans',sans-serif;transform:scaleX(0.8267);transform-origin:0 0;">@mdo</div>
<div class="t" style="left:159.50px;top:325.06px;font-size:9.0px;line-height:9.0px;color:#8f8f8f;font-weight:normal;font-family:'Liberation Sans',sans-serif;transform:scaleX(0.8267);transform-origin:0 0;">Mark</div>
<div class="t" style="left:255.50px;top:325.06px;font-size:9.0px;line-height:9.0px;color:#8f8f8f;font-weight:normal;font-family:'Liberation Sans',sans-serif;transform:scaleX(0.8267);transform-origin:0 0;">Otto</div>
<div class="t" style="left:350.50px;top:325.06px;font-size:9.0px;line-height:9.0px;color:#8f8f8f;font-weight:normal;font-family:'Liberation Sans',sans-serif;transform:scaleX(0.8267);transform-origin:0 0;">@TwBootstrap</div>
<div class="t" style="left:132.50px;top:346.56px;font-size:9.0px;line-height:9.0px;color:#8f8f8f;font-weight:normal;font-family:'Liberation Sans',sans-serif;transform:scaleX(0.8267);transform-origin:0 0;">2</div>
<div class="t" style="left:159.50px;top:346.56px;font-size:9.0px;line-height:9.0px;color:#8f8f8f;font-weight:normal;font-family:'Liberation Sans',sans-serif;transform:scaleX(0.8267);transform-origin:0 0;">Jacob</div>
<div class="t" style="left:255.50px;top:346.56px;font-size:9.0px;line-height:9.0px;color:#8f8f8f;font-weight:normal;font-family:'Liberation Sans',sans-serif;transform:scaleX(0.8267);transform-origin:0 0;">Thornton</div>
<div class="t" style="left:350.50px;top:346.56px;font-size:9.0px;line-height:9.0px;color:#8f8f8f;font-weight:normal;font-family:'Liberation Sans',sans-serif;transform:scaleX(0.8267);transform-origin:0 0;">@fat</div>
<div class="t" style="left:132.50px;top:368.56px;font-size:9.0px;line-height:9.0px;color:#8f8f8f;font-weight:normal;font-family:'Liberation Sans',sans-serif;transform:scaleX(0.8267);transform-origin:0 0;">3</div>
<div class="t" style="left:159.50px;top:368.56px;font-size:9.0px;line-height:9.0px;color:#8f8f8f;font-weight:normal;font-family:'Liberation Sans',sans-serif;transform:scaleX(0.8267);transform-origin:0 0;">Larry the Bird</div>
<div class="t" style="left:350.50px;top:368.56px;font-size:9.0px;line-height:9.0px;color:#8f8f8f;font-weight:normal;font-family:'Liberation Sans',sans-serif;transform:scaleX(0.8267);transform-origin:0 0;">@twitter</div>
<div class="b" style="left:118.00px;top:405.00px;width:720.00px;height:329.00px;background:#fff;border:1px solid #f8b6a0;border-top:none"></div>
<div class="b" style="left:118.00px;top:405.00px;width:720.00px;height:22.00px;background:#f47b53;border-top:1px solid #ee6f45;border-bottom:1px solid #ee6f45"></div>
<div class="b" style="left:127.20px;top:413.80px;width:7.60px;height:1.30px;background:#fff"></div>
<div class="b" style="left:127.20px;top:416.20px;width:7.60px;height:1.30px;background:#fff"></div>
<div class="b" style="left:127.20px;top:418.70px;width:7.60px;height:1.30px;background:#fff"></div>
<div class="t" style="left:138.00px;top:411.54px;font-size:10px;line-height:10px;color:#fff;font-weight:normal;font-family:'Liberation Serif',serif;transform:scaleX(0.82);transform-origin:0 0;">Advanced Table</div>
<svg style="left:811.80px;top:415.10px" width="7.4" height="5" viewBox="0 0 7.4 5"><path d="M0.7 0.7L3.7 3.8L6.7 0.7" fill="none" stroke="#fff" stroke-width="1.6"/></svg>
<svg style="left:824.80px;top:414.00px" width="6" height="6" viewBox="0 0 6 6"><path d="M0.8 0.8L5.2 5.2M5.2 0.8L0.8 5.2" fill="none" stroke="#fff" stroke-width="1.6"/></svg>
<div class="b" style="left:127.50px;top:436.00px;width:701.50px;height:21.70px;background:#dcdcdc"></div>
<div class="b" style="left:127.50px;top:457.70px;width:701.50px;height:266.30px;border:1px solid #e6e6e6;border-top:none"></div>
<svg style="left:132px;top:442.70px" width="9" height="9" viewBox="0 0 9 9"><path fill="#444" d="M0.3 2.6H4.2V5.8H2.6L3.1 8.2H1.6L0.9 5.8H0.3Z"/><path fill="none" stroke="#666" stroke-width=".9" d="M4.2 2.8L7.8 0.9V7.3L4.2 5.6"/></svg>
<div class="t" style="left:143.20px;top:442.56px;font-size:9.0px;line-height:9.0px;color:#555;font-weight:bold;font-family:'Liberation Sans',sans-serif;transform:scaleX(0.8356);transform-origin:0 0;">Company</div>
<svg style="left:256.5px;top:443.20px" width="7.4" height="7.4" viewBox="0 0 7.4 7.4"><circle cx="3.7" cy="3.7" r="3.7" fill="#555"/><path d="M2.5 2.8C2.5 1.5 5 1.5 5 2.8C5 3.7 3.8 3.6 3.8 4.5" fill="none" stroke="#dcdcdc" stroke-width=".9"/><circle cx="3.8" cy="5.8" r=".6" fill="#dcdcdc"/></svg>
<div class="t" style="left:265.50px;top:442.56px;font-size:9.0px;line-height:9.0px;color:#555;font-weight:bold;font-family:'Liberation Sans',sans-serif;transform:scaleX(0.8356);transform-origin:0 0;">Descrition</div>
<svg style="left:461.5px;top:443.20px" width="6" height="7.4" viewBox="0 0 6 7.4"><path fill="#555" d="M0 0H6V7.4L3 5.2L0 7.4Z"/></svg>
<div class="t" style="left:469.80px;top:442.56px;font-size:9.0px;line-height:9.0px;color:#555;font-weight:bold;font-family:'Liberation Sans',sans-serif;transform:scaleX(0.8178);transform-origin:0 0;">Profit</div>
<svg style="left:561.8px;top:443.10px" width="8.5" height="7.5" viewBox="0 0 8.5 7.5"><path fill="none" stroke="#555" stroke-width=".9" d="M5.5 1.2H0.6V6.9H6.3V4"/><path fill="#555" d="M7.2 0.2L8.3 1.3L4.3 5.3L2.8 5.7L3.2 4.2Z"/></svg>
<div class="t" style="left:572.30px;top:442.56px;font-size:9.0px;line-height:9.0px;color:#555;font-weight:bold;font-family:'Liberation Sans',sans-serif;transform:scaleX(0.8178);transform-origin:0 0;">Status</div>
<div class="b" style="left:128.50px;top:457.70px;width:699.50px;height:26.60px;background:#f9f9f9"></div>
<div class="b" style="left:128.50px;top:483.80px;width:699.50px;height:1.00px;background:#e6e6e6"></div>
<div class="t" style="left:132.70px;top:467.26px;font-size:9.0px;line-height:9.0px;color:#3a8fce;font-weight:normal;font-family:'Liberation Sans',sans-serif;transform:scaleX(0.8444);transform-origin:0 0;">Vector Ltd</div>
<div class="t" style="left:256.10px;top:467.26px;font-size:9.0px;line-height:9.0px;color:#8f8f8f;font-weight:normal;font-family:'Liberation Sans',sans-serif;transform:scaleX(0.8489);transform-origin:0 0;">Lorem Ipsum dorolo imit</div>
<div class="t" style="left:461.20px;top:467.26px;font-size:9.0px;line-height:9.0px;color:#8f8f8f;font-weight:normal;font-family:'Liberation Sans',sans-serif;transform:scaleX(0.8204);transform-origin:0 0;">12120.00$</div>
<div class="b" style="left:561.20px;top:464.50px;width:18.50px;height:13.80px;background:#e14658"></div>
<div class="t" style="left:564.20px;top:467.83px;font-size:7.4px;line-height:7.4px;color:#fff;font-weight:bold;font-family:'Liberation Sans',sans-serif;transform:scaleX(0.92);transform-origin:0 0;">Due</div>
<div class="b" style="left:657.50px;top:462.80px;width:22.40px;height:16.30px;background:#7ab22e"></div>
<div class="b" style="left:682.30px;top:462.80px;width:21.30px;height:16.30px;background:#2ba8e0"></div>
<div class="b" style="left:706.00px;top:462.80px;width:20.80px;height:16.30px;background:#df5a37"></div>
<svg style="left:665.2px;top:468.20px" width="7" height="5.5" viewBox="0 0 7 5.5"><path d="M0.6 2.6L2.6 4.6L6.4 0.8" fill="none" stroke="#fff" stroke-width="1.5"/></svg>
<svg style="left:689.5px;top:467.60px" width="7" height="7" viewBox="0 0 7 7"><path d="M5 0.3L6.7 2L2.2 6.5L0.3 6.7L0.5 4.8Z" fill="#fff"/></svg>
<svg style="left:713.2px;top:467.50px" width="6.5" height="7" viewBox="0 0 6.5 7"><path d="M0.3 1.2H6.2M2.3 1.1V0.4H4.2V1.1" fill="none" stroke="#fff" stroke-width=".8"/><path d="M1 1.7H5.5L5.1 6.7H1.4Z" fill="none" stroke="#fff" stroke-width=".8"/><path d="M2.6 2.6V5.8M3.9 2.6V5.8" stroke="#fff" stroke-width=".6"/></svg>
<div class="b" style="left:128.50px;top:510.40px;width:699.50px;height:1.00px;background:#e6e6e6"></div>
<div class="t" style="left:132.70px;top:493.86px;font-size:9.0px;line-height:9.0px;color:#3a8fce;font-weight:normal;font-family:'Liberation Sans',sans-serif;transform:scaleX(0.8444);transform-origin:0 0;">Adimin co</div>
<div class="t" style="left:256.10px;top:493.86px;font-size:9.0px;line-height:9.0px;color:#8f8f8f;font-weight:normal;font-family:'Liberation Sans',sans-serif;transform:scaleX(0.8489);transform-origin:0 0;">Lorem Ipsum dorolo</div>
<div class="t" style="left:461.20px;top:493.86px;font-size:9.0px;line-height:9.0px;color:#8f8f8f;font-weight:normal;font-family:'Liberation Sans',sans-serif;transform:scaleX(0.8204);transform-origin:0 0;">56456.00$</div>
<div class="b" style="left:561.20px;top:491.10px;width:18.50px;height:13.80px;background:#fbb117"></div>
<div class="t" style="left:564.20px;top:494.43px;font-size:7.4px;line-height:7.4px;color:#fff;font-weight:bold;font-family:'Liberation Sans',sans-serif;transform:scaleX(0.92);transform-origin:0 0;">Due</div>
<div class="b" style="left:657.50px;top:489.40px;width:22.40px;height:16.30px;background:#7ab22e"></div>
<div class="b" style="left:682.30px;top:489.40px;width:21.30px;height:16.30px;background:#2ba8e0"></div>
<div class="b" style="left:706.00px;top:489.40px;width:20.80px;height:16.30px;background:#df5a37"></div>
<svg style="left:665.2px;top:494.80px" width="7" height="5.5" viewBox="0 0 7 5.5"><path d="M0.6 2.6L2.6 4.6L6.4 0.8" fill="none" stroke="#fff" stroke-width="1.5"/></svg>
<svg style="left:689.5px;top:494.20px" width="7" height="7" viewBox="0 0 7 7"><path d="M5 0.3L6.7 2L2.2 6.5L0.3 6.7L0.5 4.8Z" fill="#fff"/></svg>
<svg style="left:713.2px;top:494.10px" width="6.5" height="7" viewBox="0 0 6.5 7"><path d="M0.3 1.2H6.2M2.3 1.1V0.4H4.2V1.1" fill="none" stroke="#fff" stroke-width=".8"/><path d="M1 1.7H5.5L5.1 6.7H1.4Z" fill="none" stroke="#fff" stroke-width=".8"/><path d="M2.6 2.6V5.8M3.9 2.6V5.8" stroke="#fff" stroke-width=".6"/></svg>
<div class="b" style="left:128.50px;top:510.90px;width:699.50px;height:26.60px;background:#f9f9f9"></div>
<div class="b" style="left:128.50px;top:537.00px;width:699.50px;height:1.00px;background:#e6e6e6"></div>
<div class="t" style="left:132.70px;top:520.46px;font-size:9.0px;line-height:9.0px;color:#3a8fce;font-weight:normal;font-family:'Liberation Sans',sans-serif;transform:scaleX(0.8444);transform-origin:0 0;">boka soka</div>
<div class="t" style="left:256.10px;top:520.46px;font-size:9.0px;line-height:9.0px;color:#8f8f8f;font-weight:normal;font-family:'Liberation Sans',sans-serif;transform:scaleX(0.8489);transform-origin:0 0;">Lorem Ipsum dorolo</div>
<div class="t" style="left:461.20px;top:520.46px;font-size:9.0px;line-height:9.0px;color:#8f8f8f;font-weight:normal;font-family:'Liberation Sans',sans-serif;transform:scaleX(0.8204);transform-origin:0 0;">14400.00$</div>
<div class="b" style="left:561.20px;top:517.70px;width:18.50px;height:13.80px;background:#8dcb6a"></div>
<div class="t" style="left:563.60px;top:521.03px;font-size:7.4px;line-height:7.4px;color:#fff;font-weight:bold;font-family:'Liberation Sans',sans-serif;transform:scaleX(0.92);transform-origin:0 0;">Paid</div>
<div class="b" style="left:657.50px;top:516.00px;width:22.40px;height:16.30px;background:#7ab22e"></div>
<div class="b" style="left:682.30px;top:516.00px;width:21.30px;height:16.30px;background:#2ba8e0"></div>
<div class="b" style="left:706.00px;top:516.00px;width:20.80px;height:16.30px;background:#df5a37"></div>
<svg style="left:665.2px;top:521.40px" width="7" height="5.5" viewBox="0 0 7 5.5"><path d="M0.6 2.6L2.6 4.6L6.4 0.8" fill="none" stroke="#fff" stroke-width="1.5"/></svg>
<svg style="left:689.5px;top:520.80px" width="7" height="7" viewBox="0 0 7 7"><path d="M5 0.3L6.7 2L2.2 6.5L0.3 6.7L0.5 4.8Z" fill="#fff"/></svg>
<svg style="left:713.2px;top:520.70px" width="6.5" height="7" viewBox="0 0 6.5 7"><path d="M0.3 1.2H6.2M2.3 1.1V0.4H4.2V1.1" fill="none" stroke="#fff" stroke-width=".8"/><path d="M1 1.7H5.5L5.1 6.7H1.4Z" fill="none" stroke="#fff" stroke-width=".8"/><path d="M2.6 2.6V5.8M3.9 2.6V5.8" stroke="#fff" stroke-width=".6"/></svg>
<div class="b" style="left:128.50px;top:563.60px;width:699.50px;height:1.00px;background:#e6e6e6"></div>
<div class="t" style="left:132.70px;top:547.06px;font-size:9.0px;line-height:9.0px;color:#3a8fce;font-weight:normal;font-family:'Liberation Sans',sans-serif;transform:scaleX(0.8444);transform-origin:0 0;">salbal llb</div>
<div class="t" style="left:256.10px;top:547.06px;font-size:9.0px;line-height:9.0px;color:#8f8f8f;font-weight:normal;font-family:'Liberation Sans',sans-serif;transform:scaleX(0.8489);transform-origin:0 0;">Lorem Ipsum dorolo</div>
<div class="t" style="left:461.20px;top:547.06px;font-size:9.0px;line-height:9.0px;color:#8f8f8f;font-weight:normal;font-family:'Liberation Sans',sans-serif;transform:scaleX(0.8204);transform-origin:0 0;">2323.50$</div>
<div class="b" style="left:561.20px;top:544.30px;width:18.50px;height:13.80px;background:#8c8c8c"></div>
<div class="t" style="left:563.60px;top:547.63px;font-size:7.4px;line-height:7.4px;color:#fff;font-weight:bold;font-family:'Liberation Sans',sans-serif;transform:scaleX(0.92);transform-origin:0 0;">Paid</div>
<div class="b" style="left:657.50px;top:542.60px;width:22.40px;height:16.30px;background:#7ab22e"></div>
<div class="b" style="left:682.30px;top:542.60px;width:21.30px;height:16.30px;background:#2ba8e0"></div>
<div class="b" style="left:706.00px;top:542.60px;width:20.80px;height:16.30px;background:#df5a37"></div>
<svg style="left:665.2px;top:548.00px" width="7" height="5.5" viewBox="0 0 7 5.5"><path d="M0.6 2.6L2.6 4.6L6.4 0.8" fill="none" stroke="#fff" stroke-width="1.5"/></svg>
<svg style="left:689.5px;top:547.40px" width="7" height="7" viewBox="0 0 7 7"><path d="M5 0.3L6.7 2L2.2 6.5L0.3 6.7L0.5 4.8Z" fill="#fff"/></svg>
<svg style="left:713.2px;top:547.30px" width="6.5" height="7" viewBox="0 0 6.5 7"><path d="M0.3 1.2H6.2M2.3 1.1V0.4H4.2V1.1" fill="none" stroke="#fff" stroke-width=".8"/><path d="M1 1.7H5.5L5.1 6.7H1.4Z" fill="none" stroke="#fff" stroke-width=".8"/><path d="M2.6 2.6V5.8M3.9 2.6V5.8" stroke="#fff" stroke-width=".6"/></svg>
<div class="b" style="left:128.50px;top:564.10px;width:699.50px;height:26.60px;background:#f9f9f9"></div>
<div class="b" style="left:128.50px;top:590.20px;width:699.50px;height:1.00px;background:#e6e6e6"></div>
<div class="t" style="left:132.70px;top:573.66px;font-size:9.0px;line-height:9.0px;color:#3a8fce;font-weight:normal;font-family:'Liberation Sans',sans-serif;transform:scaleX(0.8444);transform-origin:0 0;">Vector Ltd</div>
<div class="t" style="left:256.10px;top:573.66px;font-size:9.0px;line-height:9.0px;color:#8f8f8f;font-weight:normal;font-family:'Liberation Sans',sans-serif;transform:scaleX(0.8489);transform-origin:0 0;">Lorem Ipsum dorolo imit</div>
<div class="t" style="left:461.20px;top:573.66px;font-size:9.0px;line-height:9.0px;color:#8f8f8f;font-weight:normal;font-family:'Liberation Sans',sans-serif;transform:scaleX(0.8204);transform-origin:0 0;">12120.00$</div>
<div class="b" style="left:561.20px;top:570.90px;width:18.50px;height:13.80px;background:#e14658"></div>
<div class="t" style="left:564.20px;top:574.23px;font-size:7.4px;line-height:7.4px;color:#fff;font-weight:bold;font-family:'Liberation Sans',sans-serif;transform:scaleX(0.92);transform-origin:0 0;">Due</div>
<div class="b" style="left:657.50px;top:569.20px;width:22.40px;height:16.30px;background:#7ab22e"></div>
<div class="b" style="left:682.30px;top:569.20px;width:21.30px;height:16.30px;background:#2ba8e0"></div>
<div class="b" style="left:706.00px;top:569.20px;width:20.80px;height:16.30px;background:#df5a37"></div>
<svg style="left:665.2px;top:574.60px" width="7" height="5.5" viewBox="0 0 7 5.5"><path d="M0.6 2.6L2.6 4.6L6.4 0.8" fill="none" stroke="#fff" stroke-width="1.5"/></svg>
<svg style="left:689.5px;top:574.00px" width="7" height="7" viewBox="0 0 7 7"><path d="M5 0.3L6.7 2L2.2 6.5L0.3 6.7L0.5 4.8Z" fill="#fff"/></svg>
<svg style="left:713.2px;top:573.90px" width="6.5" height="7" viewBox="0 0 6.5 7"><path d="M0.3 1.2H6.2M2.3 1.1V0.4H4.2V1.1" fill="none" stroke="#fff" stroke-width=".8"/><path d="M1 1.7H5.5L5.1 6.7H1.4Z" fill="none" stroke="#fff" stroke-width=".8"/><path d="M2.6 2.6V5.8M3.9 2.6V5.8" stroke="#fff" stroke-width=".6"/></svg>
<div class="b" style="left:128.50px;top:616.80px;width:699.50px;height:1.00px;background:#e6e6e6"></div>
<div class="t" style="left:132.70px;top:600.26px;font-size:9.0px;line-height:9.0px;color:#3a8fce;font-weight:normal;font-family:'Liberation Sans',sans-serif;transform:scaleX(0.8444);transform-origin:0 0;">Adimin co</div>
<div class="t" style="left:256.10px;top:600.26px;font-size:9.0px;line-height:9.0px;color:#8f8f8f;font-weight:normal;font-family:'Liberation Sans',sans-serif;transform:scaleX(0.8489);transform-origin:0 0;">Lorem Ipsum dorolo</div>
<div class="t" style="left:461.20px;top:600.26px;font-size:9.0px;line-height:9.0px;color:#8f8f8f;font-weight:normal;font-family:'Liberation Sans',sans-serif;transform:scaleX(0.8204);transform-origin:0 0;">56456.00$</div>
<div class="b" style="left:561.20px;top:597.50px;width:18.50px;height:13.80px;background:#fbb117"></div>
<div class="t" style="left:564.20px;top:600.83px;font-size:7.4px;line-height:7.4px;color:#fff;font-weight:bold;font-family:'Liberation Sans',sans-serif;transform:scaleX(0.92);transform-origin:0 0;">Due</div>
<div class="b" style="left:657.50px;top:595.80px;width:22.40px;height:16.30px;background:#7ab22e"></div>
<div class="b" style="left:682.30px;top:595.80px;width:21.30px;height:16.30px;background:#2ba8e0"></div>
<div class="b" style="left:706.00px;top:595.80px;width:20.80px;height:16.30px;background:#df5a37"></div>
<svg style="left:665.2px;top:601.20px" width="7" height="5.5" viewBox="0 0 7 5.5"><path d="M0.6 2.6L2.6 4.6L6.4 0.8" fill="none" stroke="#fff" stroke-width="1.5"/></svg>
<svg style="left:689.5px;top:600.60px" width="7" height="7" viewBox="0 0 7 7"><path d="M5 0.3L6.7 2L2.2 6.5L0.3 6.7L0.5 4.8Z" fill="#fff"/></svg>
<svg style="left:713.2px;top:600.50px" width="6.5" height="7" viewBox="0 0 6.5 7"><path d="M0.3 1.2H6.2M2.3 1.1V0.4H4.2V1.1" fill="none" stroke="#fff" stroke-width=".8"/><path d="M1 1.7H5.5L5.1 6.7H1.4Z" fill="none" stroke="#fff" stroke-width=".8"/><path d="M2.6 2.6V5.8M3.9 2.6V5.8" stroke="#fff" stroke-width=".6"/></svg>
<div class="b" style="left:128.50px;top:617.30px;width:699.50px;height:26.60px;background:#f9f9f9"></div>
<div class="b" style="left:128.50px;top:643.40px;width:699.50px;height:1.00px;background:#e6e6e6"></div>
<div class="t" style="left:132.70px;top:626.86px;font-size:9.0px;line-height:9.0px;color:#3a8fce;font-weight:normal;font-family:'Liberation Sans',sans-serif;transform:scaleX(0.8444);transform-origin:0 0;">Vector Ltd</div>
<div class="t" style="left:256.10px;top:626.86px;font-size:9.0px;line-height:9.0px;color:#8f8f8f;font-weight:normal;font-family:'Liberation Sans',sans-serif;transform:scaleX(0.8489);transform-origin:0 0;">Lorem Ipsum dorolo imit</div>
<div class="t" style="left:461.20px;top:626.86px;font-size:9.0px;line-height:9.0px;color:#8f8f8f;font-weight:normal;font-family:'Liberation Sans',sans-serif;transform:scaleX(0.8204);transform-origin:0 0;">12120.00$</div>
<div class="b" style="left:561.20px;top:624.10px;width:18.50px;height:13.80px;background:#e14658"></div>
<div class="t" style="left:564.20px;top:627.43px;font-size:7.4px;line-height:7.4px;color:#fff;font-weight:bold;font-family:'Liberation Sans',sans-serif;transform:scaleX(0.92);transform-origin:0 0;">Due</div>
<div class="b" style="left:657.50px;top:622.40px;width:22.40px;height:16.30px;background:#7ab22e"></div>
<div class="b" style="left:682.30px;top:622.40px;width:21.30px;height:16.30px;background:#2ba8e0"></div>
<div class="b" style="left:706.00px;top:622.40px;width:20.80px;height:16.30px;background:#df5a37"></div>
<svg style="left:665.2px;top:627.80px" width="7" height="5.5" viewBox="0 0 7 5.5"><path d="M0.6 2.6L2.6 4.6L6.4 0.8" fill="none" stroke="#fff" stroke-width="1.5"/></svg>
<svg style="left:689.5px;top:627.20px" width="7" height="7" viewBox="0 0 7 7"><path d="M5 0.3L6.7 2L2.2 6.5L0.3 6.7L0.5 4.8Z" fill="#fff"/></svg>
<svg style="left:713.2px;top:627.10px" width="6.5" height="7" viewBox="0 0 6.5 7"><path d="M0.3 1.2H6.2M2.3 1.1V0.4H4.2V1.1" fill="none" stroke="#fff" stroke-width=".8"/><path d="M1 1.7H5.5L5.1 6.7H1.4Z" fill="none" stroke="#fff" stroke-width=".8"/><path d="M2.6 2.6V5.8M3.9 2.6V5.8" stroke="#fff" stroke-width=".6"/></svg>
<div class="b" style="left:128.50px;top:670.00px;width:699.50px;height:1.00px;background:#e6e6e6"></div>
<div class="t" style="left:132.70px;top:653.46px;font-size:9.0px;line-height:9.0px;color:#3a8fce;font-weight:normal;font-family:'Liberation Sans',sans-serif;transform:scaleX(0.8444);transform-origin:0 0;">Adimin co</div>
<div class="t" style="left:256.10px;top:653.46px;font-size:9.0px;line-height:9.0px;color:#8f8f8f;font-weight:normal;font-family:'Liberation Sans',sans-serif;transform:scaleX(0.8489);transform-origin:0 0;">Lorem Ipsum dorolo</div>
<div class="t" style="left:461.20px;top:653.46px;font-size:9.0px;line-height:9.0px;color:#8f8f8f;font-weight:normal;font-family:'Liberation Sans',sans-serif;transform:scaleX(0.8204);transform-origin:0 0;">56456.00$</div>
<div class="b" style="left:561.20px;top:650.70px;width:18.50px;height:13.80px;background:#fbb117"></div>
<div class="t" style="left:564.20px;top:654.03px;font-size:7.4px;line-height:7.4px;color:#fff;font-weight:bold;font-family:'Liberation Sans',sans-serif;transform:scaleX(0.92);transform-origin:0 0;">Due</div>
<div class="b" style="left:657.50px;top:649.00px;width:22.40px;height:16.30px;background:#7ab22e"></div>
<div class="b" style="left:682.30px;top:649.00px;width:21.30px;height:16.30px;background:#2ba8e0"></div>
<div class="b" style="left:706.00px;top:649.00px;width:20.80px;height:16.30px;background:#df5a37"></div>
<svg style="left:665.2px;top:654.40px" width="7" height="5.5" viewBox="0 0 7 5.5"><path d="M0.6 2.6L2.6 4.6L6.4 0.8" fill="none" stroke="#fff" stroke-width="1.5"/></svg>
<svg style="left:689.5px;top:653.80px" width="7" height="7" viewBox="0 0 7 7"><path d="M5 0.3L6.7 2L2.2 6.5L0.3 6.7L0.5 4.8Z" fill="#fff"/></svg>
<svg style="left:713.2px;top:653.70px" width="6.5" height="7" viewBox="0 0 6.5 7"><path d="M0.3 1.2H6.2M2.3 1.1V0.4H4.2V1.1" fill="none" stroke="#fff" stroke-width=".8"/><path d="M1 1.7H5.5L5.1 6.7H1.4Z" fill="none" stroke="#fff" stroke-width=".8"/><path d="M2.6 2.6V5.8M3.9 2.6V5.8" stroke="#fff" stroke-width=".6"/></svg>
<div class="b" style="left:128.50px;top:670.50px;width:699.50px;height:26.60px;background:#f9f9f9"></div>
<div class="b" style="left:128.50px;top:696.60px;width:699.50px;height:1.00px;background:#e6e6e6"></div>
<div class="t" style="left:132.70px;top:680.06px;font-size:9.0px;line-height:9.0px;color:#3a8fce;font-weight:normal;font-family:'Liberation Sans',sans-serif;transform:scaleX(0.8444);transform-origin:0 0;">Vector Ltd</div>
<div class="t" style="left:256.10px;top:680.06px;font-size:9.0px;line-height:9.0px;color:#8f8f8f;font-weight:normal;font-family:'Liberation Sans',sans-serif;transform:scaleX(0.8489);transform-origin:0 0;">Lorem Ipsum dorolo imit</div>
<div class="t" style="left:461.20px;top:680.06px;font-size:9.0px;line-height:9.0px;color:#8f8f8f;font-weight:normal;font-family:'Liberation Sans',sans-serif;transform:scaleX(0.8204);transform-origin:0 0;">12120.00$</div>
<div class="b" style="left:561.20px;top:677.30px;width:18.50px;height:13.80px;background:#e14658"></div>
<div class="t" style="left:564.20px;top:680.63px;font-size:7.4px;line-height:7.4px;color:#fff;font-weight:bold;font-family:'Liberation Sans',sans-serif;transform:scaleX(0.92);transform-origin:0 0;">Due</div>
<div class="b" style="left:657.50px;top:675.60px;width:22.40px;height:16.30px;background:#7ab22e"></div>
<div class="b" style="left:682.30px;top:675.60px;width:21.30px;height:16.30px;background:#2ba8e0"></div>
<div class="b" style="left:706.00px;top:675.60px;width:20.80px;height:16.30px;background:#df5a37"></div>
<svg style="left:665.2px;top:681.00px" width="7" height="5.5" viewBox="0 0 7 5.5"><path d="M0.6 2.6L2.6 4.6L6.4 0.8" fill="none" stroke="#fff" stroke-width="1.5"/></svg>
<svg style="left:689.5px;top:680.40px" width="7" height="7" viewBox="0 0 7 7"><path d="M5 0.3L6.7 2L2.2 6.5L0.3 6.7L0.5 4.8Z" fill="#fff"/></svg>
<svg style="left:713.2px;top:680.30px" width="6.5" height="7" viewBox="0 0 6.5 7"><path d="M0.3 1.2H6.2M2.3 1.1V0.4H4.2V1.1" fill="none" stroke="#fff" stroke-width=".8"/><path d="M1 1.7H5.5L5.1 6.7H1.4Z" fill="none" stroke="#fff" stroke-width=".8"/><path d="M2.6 2.6V5.8M3.9 2.6V5.8" stroke="#fff" stroke-width=".6"/></svg>
<div class="t" style="left:132.70px;top:706.66px;font-size:9.0px;line-height:9.0px;color:#3a8fce;font-weight:normal;font-family:'Liberation Sans',sans-serif;transform:scaleX(0.8444);transform-origin:0 0;">Adimin co</div>
<div class="t" style="left:256.10px;top:706.66px;font-size:9.0px;line-height:9.0px;color:#8f8f8f;font-weight:normal;font-family:'Liberation Sans',sans-serif;transform:scaleX(0.8489);transform-origin:0 0;">Lorem Ipsum dorolo</div>
<div class="t" style="left:461.20px;top:706.66px;font-size:9.0px;line-height:9.0px;color:#8f8f8f;font-weight:normal;font-family:'Liberation Sans',sans-serif;transform:scaleX(0.8204);transform-origin:0 0;">56456.00$</div>
<div class="b" style="left:561.20px;top:703.90px;width:18.50px;height:13.80px;background:#fbb117"></div>
<div class="t" style="left:564.20px;top:707.23px;font-size:7.4px;line-height:7.4px;color:#fff;font-weight:bold;font-family:'Liberation Sans',sans-serif;transform:scaleX(0.92);transform-origin:0 0;">Due</div>
<div class="b" style="left:657.50px;top:702.20px;width:22.40px;height:16.30px;background:#7ab22e"></div>
<div class="b" style="left:682.30px;top:702.20px;width:21.30px;height:16.30px;background:#2ba8e0"></div>
<div class="b" style="left:706.00px;top:702.20px;width:20.80px;height:16.30px;background:#df5a37"></div>
<svg style="left:665.2px;top:707.60px" width="7" height="5.5" viewBox="0 0 7 5.5"><path d="M0.6 2.6L2.6 4.6L6.4 0.8" fill="none" stroke="#fff" stroke-width="1.5"/></svg>
<svg style="left:689.5px;top:707.00px" width="7" height="7" viewBox="0 0 7 7"><path d="M5 0.3L6.7 2L2.2 6.5L0.3 6.7L0.5 4.8Z" fill="#fff"/></svg>
<svg style="left:713.2px;top:706.90px" width="6.5" height="7" viewBox="0 0 6.5 7"><path d="M0.3 1.2H6.2M2.3 1.1V0.4H4.2V1.1" fill="none" stroke="#fff" stroke-width=".8"/><path d="M1 1.7H5.5L5.1 6.7H1.4Z" fill="none" stroke="#fff" stroke-width=".8"/><path d="M2.6 2.6V5.8M3.9 2.6V5.8" stroke="#fff" stroke-width=".6"/></svg>
<div class="b" style="left:0.00px;top:745.00px;width:850.00px;height:24.00px;background:#efefef"></div>
<div class="t" style="left:398.90px;top:753.76px;font-size:9.0px;line-height:9.0px;color:#8c8c8c;font-weight:normal;font-family:'Liberation Sans',sans-serif;transform:scaleX(0.7858);transform-origin:0 0;">2013 © MetroAdmin.</div>
</body></html>
